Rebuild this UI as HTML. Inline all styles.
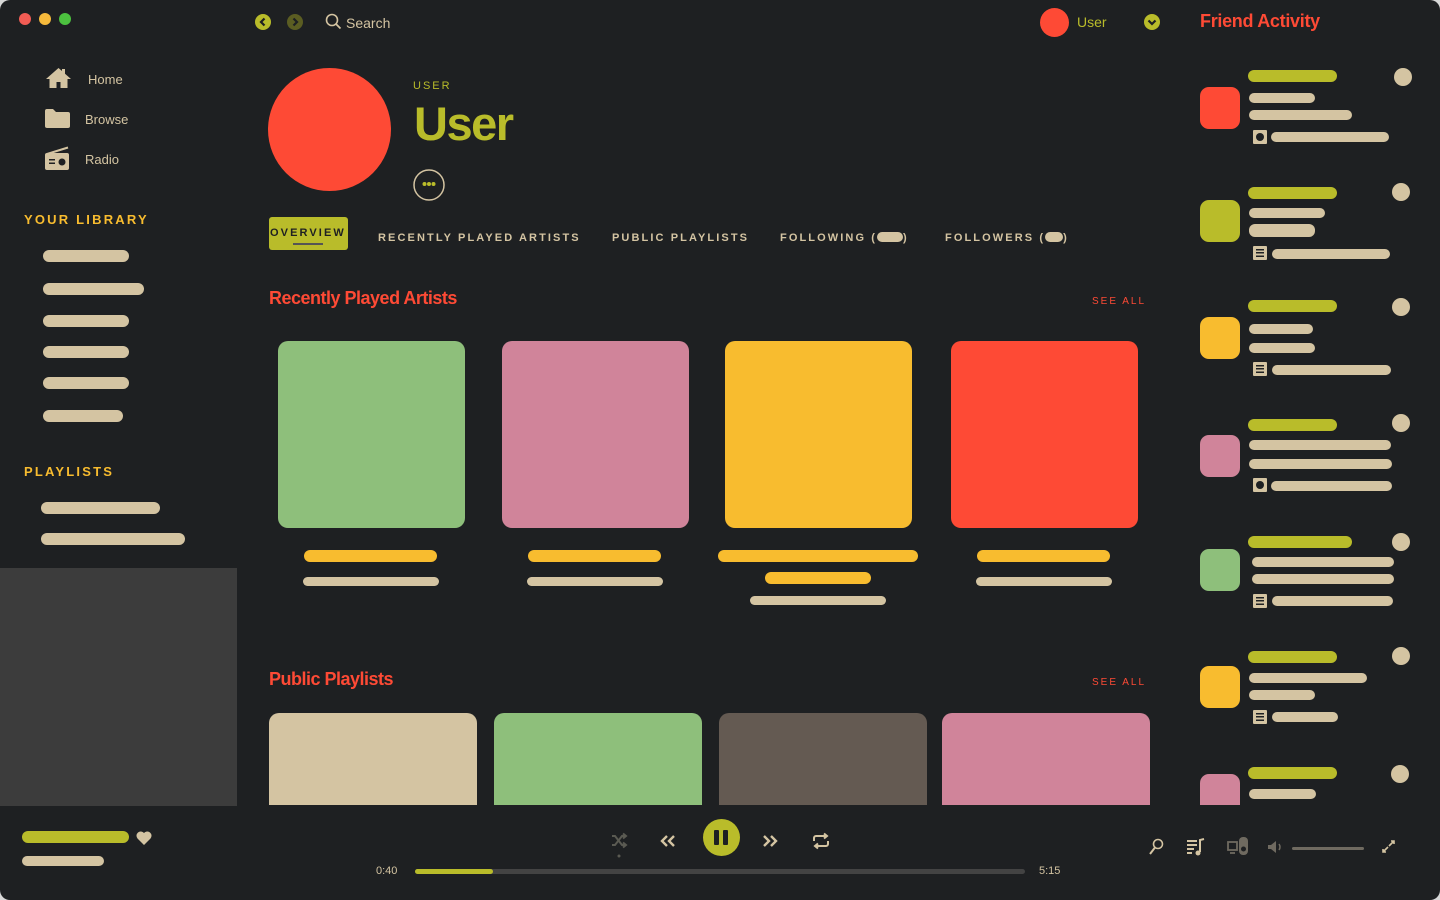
<!DOCTYPE html>
<html><head><meta charset="utf-8"><style>
*{margin:0;padding:0;box-sizing:border-box}
body{width:1440px;height:900px;background:#d8d8d8;overflow:hidden;font-family:"Liberation Sans",sans-serif}
#w{position:absolute;left:0;top:0;width:1440px;height:900px;background:#1e2022;border-radius:10px;overflow:hidden}
.a{position:absolute}
.b{position:absolute;border-radius:6px}
.be{background:#d4c4a2}.li{background:#b9bc2a}.ye{background:#f8bc2f}
.t{position:absolute;color:#d4c4a2;font-size:13px;white-space:nowrap}
.tab{position:absolute;top:232px;color:#d4c4a2;font-size:11px;font-weight:bold;letter-spacing:2.1px;white-space:nowrap}
.pill{display:inline-block;width:26px;height:10px;background:#d4c4a2;border-radius:5px;vertical-align:-1px}
.h{position:absolute;color:#fe4a35;font-size:18px;font-weight:bold;letter-spacing:-0.5px}
.sa{position:absolute;color:#fe4a35;font-size:10px;letter-spacing:2px}
.sq{position:absolute;top:341px;width:187px;height:187px;border-radius:10px}
.pl{position:absolute;top:713px;width:208px;height:92px;border-radius:10px 10px 0 0}
.av{position:absolute;left:1200px;width:40px;height:42px;border-radius:9px}
.c{position:absolute;width:18px;height:18px;border-radius:50%;background:#d4c4a2}
.ic{position:absolute;left:1253px;width:14px;height:14px;background:#d4c4a2;border-radius:1px}
.ic.d::after{content:"";position:absolute;left:3px;top:3px;width:8px;height:8px;border-radius:50%;background:#1e2022}
.ic.l::after{content:"";position:absolute;left:3px;top:3px;width:8px;height:8px;background:repeating-linear-gradient(#1e2022 0 1.5px,transparent 1.5px 3.2px)}
</style></head><body><div id="w">
<div class="a" style="left:19px;top:13px;width:12px;height:12px;border-radius:50%;background:#f25c54"></div>
<div class="a" style="left:39px;top:13px;width:12px;height:12px;border-radius:50%;background:#f6b93b"></div>
<div class="a" style="left:59px;top:13px;width:12px;height:12px;border-radius:50%;background:#4cc13f"></div>
<svg class="a" style="left:255px;top:14px" width="16" height="16"><circle cx="8" cy="8" r="8" fill="#b9bc2a"/><path d="M9.5 4.5L6 8l3.5 3.5" stroke="#1e2022" stroke-width="2.2" fill="none"/></svg>
<svg class="a" style="left:287px;top:14px" width="16" height="16"><circle cx="8" cy="8" r="8" fill="#5b5d22"/><path d="M6.5 4.5L10 8l-3.5 3.5" stroke="#1e2022" stroke-width="2.2" fill="none"/></svg>
<svg class="a" style="left:325px;top:13px" width="17" height="17"><circle cx="7" cy="7" r="5.5" stroke="#d4c4a2" stroke-width="1.6" fill="none"/><path d="M11 11l4.5 4.5" stroke="#d4c4a2" stroke-width="1.8"/></svg>
<div class="t" style="left:346px;top:15px;font-size:14px">Search</div>
<div class="a" style="left:1040px;top:8px;width:29px;height:29px;border-radius:50%;background:#fe4a35"></div>
<div class="t" style="left:1077px;top:14px;color:#b9bc2a;font-size:14px">User</div>
<svg class="a" style="left:1144px;top:14px" width="16" height="16"><circle cx="8" cy="8" r="8" fill="#b9bc2a"/><path d="M4.5 6.5L8 10l3.5-3.5" stroke="#1e2022" stroke-width="2.2" fill="none"/></svg>
<div class="a" style="left:1200px;top:11px;color:#fe4a35;font-size:18px;font-weight:bold;letter-spacing:-0.3px">Friend Activity</div>
<svg class="a" style="left:45px;top:67px" width="27" height="22"><path d="M13.5 1L1 12h3.5v9h7v-6h4v6h7v-9H26L20 6.7V2h-3v2L13.5 1z" fill="#d4c4a2"/></svg>
<div class="t" style="left:88px;top:72px">Home</div>
<svg class="a" style="left:45px;top:109px" width="25" height="19"><path d="M0 2a2 2 0 0 1 2-2h6l3 3h12a2 2 0 0 1 2 2v12a2 2 0 0 1-2 2H2a2 2 0 0 1-2-2z" fill="#d4c4a2"/></svg>
<div class="t" style="left:85px;top:112px">Browse</div>
<svg class="a" style="left:45px;top:146px" width="25" height="24"><path d="M2 8L23 1.5" stroke="#d4c4a2" stroke-width="2"/><rect x="0" y="7" width="24" height="17" rx="2" fill="#d4c4a2"/><rect x="4" y="13" width="6" height="1.5" fill="#1e2022"/><rect x="4" y="16.5" width="6" height="1.5" fill="#1e2022"/><circle cx="17" cy="16" r="3.5" fill="#1e2022"/></svg>
<div class="t" style="left:85px;top:152px">Radio</div>
<div class="a" style="left:24px;top:212px;color:#f8bc2f;font-size:13px;font-weight:bold;letter-spacing:2.2px">YOUR LIBRARY</div>
<div class="b be" style="left:43px;top:250px;width:86px;height:12px"></div>
<div class="b be" style="left:43px;top:283px;width:101px;height:12px"></div>
<div class="b be" style="left:43px;top:315px;width:86px;height:12px"></div>
<div class="b be" style="left:43px;top:346px;width:86px;height:12px"></div>
<div class="b be" style="left:43px;top:377px;width:86px;height:12px"></div>
<div class="b be" style="left:43px;top:410px;width:80px;height:12px"></div>
<div class="a" style="left:24px;top:464px;color:#f8bc2f;font-size:13px;font-weight:bold;letter-spacing:2.2px">PLAYLISTS</div>
<div class="b be" style="left:41px;top:502px;width:119px;height:12px"></div>
<div class="b be" style="left:41px;top:533px;width:144px;height:12px"></div>
<div class="a" style="left:0;top:568px;width:237px;height:238px;background:#3c3c3c"></div>
<div class="a" style="left:268px;top:68px;width:123px;height:123px;border-radius:50%;background:#fe4a35"></div>
<div class="a" style="left:413px;top:80px;color:#b9bc2a;font-size:11px;letter-spacing:2px">USER</div>
<div class="a" style="left:414px;top:96px;color:#b9bc2a;font-size:47px;font-weight:bold;letter-spacing:-1.5px">User</div>
<svg class="a" style="left:413px;top:169px" width="32" height="32"><circle cx="16" cy="16" r="15" stroke="#d4c4a2" stroke-width="1.5" fill="none"/><circle cx="11.5" cy="15" r="2" fill="#b9bc2a"/><circle cx="16" cy="15" r="2" fill="#b9bc2a"/><circle cx="20.5" cy="15" r="2" fill="#b9bc2a"/></svg>
<div class="a" style="left:269px;top:217px;width:79px;height:33px;border-radius:3px;background:#b9bc2a"></div>
<div class="a" style="left:270px;top:227px;color:#1e2022;font-size:11px;font-weight:bold;letter-spacing:2.1px">OVERVIEW</div>
<div class="a" style="left:293px;top:243px;width:30px;height:2px;background:#555"></div>
<div class="tab" style="left:378px">RECENTLY PLAYED ARTISTS</div>
<div class="tab" style="left:612px">PUBLIC PLAYLISTS</div>
<div class="tab" style="left:780px">FOLLOWING (<span class="pill"></span>)</div>
<div class="tab" style="left:945px">FOLLOWERS (<span class="pill" style="width:18px"></span>)</div>
<div class="h" style="left:269px;top:288px">Recently Played Artists</div>
<div class="sa" style="left:1092px;top:296px">SEE ALL</div>
<div class="sq" style="left:278px;background:#8ebf7b"></div>
<div class="sq" style="left:502px;background:#d0849a"></div>
<div class="sq" style="left:725px;background:#f8bc2f"></div>
<div class="sq" style="left:951px;background:#fe4a35"></div>
<div class="b ye" style="left:304px;top:550px;width:133px;height:12px"></div>
<div class="b be" style="left:303px;top:577px;width:136px;height:9px"></div>
<div class="b ye" style="left:528px;top:550px;width:133px;height:12px"></div>
<div class="b be" style="left:527px;top:577px;width:136px;height:9px"></div>
<div class="b ye" style="left:718px;top:550px;width:200px;height:12px"></div>
<div class="b ye" style="left:765px;top:572px;width:106px;height:12px"></div>
<div class="b be" style="left:750px;top:596px;width:136px;height:9px"></div>
<div class="b ye" style="left:977px;top:550px;width:133px;height:12px"></div>
<div class="b be" style="left:976px;top:577px;width:136px;height:9px"></div>
<div class="h" style="left:269px;top:669px">Public Playlists</div>
<div class="sa" style="left:1092px;top:677px">SEE ALL</div>
<div class="pl" style="left:269px;background:#d4c4a2"></div>
<div class="pl" style="left:494px;background:#8ebf7b"></div>
<div class="pl" style="left:719px;background:#645a52"></div>
<div class="pl" style="left:942px;background:#d0849a"></div>
<div class="av" style="top:87px;background:#fe4a35"></div>
<div class="b li" style="left:1248px;top:70px;width:89px;height:12px"></div><div class="c" style="left:1394px;top:68px"></div>
<div class="b be" style="left:1249px;top:93px;width:66px;height:10px"></div><div class="b be" style="left:1249px;top:110px;width:103px;height:10px"></div>
<div class="ic d" style="top:130px"></div><div class="b be" style="left:1271px;top:132px;width:118px;height:10px"></div>
<div class="av" style="top:200px;background:#b9bc2a"></div>
<div class="b li" style="left:1248px;top:187px;width:89px;height:12px"></div><div class="c" style="left:1392px;top:183px"></div>
<div class="b be" style="left:1249px;top:208px;width:76px;height:10px"></div><div class="b be" style="left:1249px;top:224px;width:66px;height:13px"></div>
<div class="ic l" style="top:246px"></div><div class="b be" style="left:1272px;top:249px;width:118px;height:10px"></div>
<div class="av" style="top:317px;background:#f8bc2f"></div>
<div class="b li" style="left:1248px;top:300px;width:89px;height:12px"></div><div class="c" style="left:1392px;top:298px"></div>
<div class="b be" style="left:1249px;top:324px;width:64px;height:10px"></div><div class="b be" style="left:1249px;top:343px;width:66px;height:10px"></div>
<div class="ic l" style="top:362px"></div><div class="b be" style="left:1272px;top:365px;width:119px;height:10px"></div>
<div class="av" style="top:435px;background:#d0849a"></div>
<div class="b li" style="left:1248px;top:419px;width:89px;height:12px"></div><div class="c" style="left:1392px;top:414px"></div>
<div class="b be" style="left:1249px;top:440px;width:142px;height:10px"></div><div class="b be" style="left:1249px;top:459px;width:143px;height:10px"></div>
<div class="ic d" style="top:478px"></div><div class="b be" style="left:1271px;top:481px;width:121px;height:10px"></div>
<div class="av" style="top:549px;background:#8ebf7b"></div>
<div class="b li" style="left:1248px;top:536px;width:104px;height:12px"></div><div class="c" style="left:1392px;top:533px"></div>
<div class="b be" style="left:1252px;top:557px;width:142px;height:10px"></div><div class="b be" style="left:1252px;top:574px;width:142px;height:10px"></div>
<div class="ic l" style="top:594px"></div><div class="b be" style="left:1272px;top:596px;width:121px;height:10px"></div>
<div class="av" style="top:666px;background:#f8bc2f"></div>
<div class="b li" style="left:1248px;top:651px;width:89px;height:12px"></div><div class="c" style="left:1392px;top:647px"></div>
<div class="b be" style="left:1249px;top:673px;width:118px;height:10px"></div><div class="b be" style="left:1249px;top:690px;width:66px;height:10px"></div>
<div class="ic l" style="top:710px"></div><div class="b be" style="left:1272px;top:712px;width:66px;height:10px"></div>
<div class="a" style="left:1200px;top:774px;width:40px;height:31px;border-radius:9px 9px 0 0;background:#d0849a"></div>
<div class="b li" style="left:1248px;top:767px;width:89px;height:12px"></div><div class="c" style="left:1391px;top:765px"></div>
<div class="b be" style="left:1249px;top:789px;width:67px;height:10px"></div>
<div class="b li" style="left:22px;top:831px;width:107px;height:12px"></div>
<svg class="a" style="left:136px;top:830px" width="16" height="15"><path d="M8 15L1.5 8.5A4 4 0 0 1 8 3a4 4 0 0 1 6.5 5.5z" fill="#d4c4a2"/></svg>
<div class="b be" style="left:22px;top:856px;width:82px;height:10px"></div>
<svg class="a" style="left:610px;top:832px" width="18" height="26"><path d="M2 4h3l7 9h4M2 13h3l7-9h4M13 1.5l3 2.5-3 2.5M13 10.5l3 2.5-3 2.5" stroke="#5a5a52" stroke-width="2" fill="none"/><circle cx="9" cy="24" r="1.5" fill="#5a5a52"/></svg>
<svg class="a" style="left:660px;top:834px" width="16" height="14"><path d="M7 2L2 7l5 5M14 2L9 7l5 5" stroke="#d4c4a2" stroke-width="2.4" fill="none"/></svg>
<div class="a" style="left:703px;top:819px;width:37px;height:37px;border-radius:50%;background:#b9bc2a"></div>
<div class="a" style="left:714px;top:830px;width:5px;height:15px;background:#1e2022;border-radius:1px"></div>
<div class="a" style="left:723px;top:830px;width:5px;height:15px;background:#1e2022;border-radius:1px"></div>
<svg class="a" style="left:762px;top:834px" width="16" height="14"><path d="M2 2l5 5-5 5M9 2l5 5-5 5" stroke="#d4c4a2" stroke-width="2.4" fill="none"/></svg>
<svg class="a" style="left:811px;top:832px" width="20" height="18"><path d="M3 9V6a2 2 0 0 1 2-2h10M13 1.5l3 2.5-3 2.5M17 9v3a2 2 0 0 1-2 2H5M7 11.5l-3 2.5 3 2.5" stroke="#d4c4a2" stroke-width="2" fill="none"/></svg>
<div class="t" style="left:376px;top:865px;font-size:11px">0:40</div>
<div class="a" style="left:415px;top:869px;width:610px;height:5px;border-radius:3px;background:#434343"></div>
<div class="a" style="left:415px;top:869px;width:78px;height:5px;border-radius:3px;background:#b9bc2a"></div>
<div class="t" style="left:1039px;top:865px;font-size:11px">5:15</div>
<svg class="a" style="left:1148px;top:838px" width="16" height="18"><circle cx="10" cy="6" r="4.5" stroke="#d4c4a2" stroke-width="1.6" fill="none"/><path d="M7 9.5L2 16" stroke="#d4c4a2" stroke-width="2"/></svg>
<svg class="a" style="left:1186px;top:838px" width="20" height="18"><path d="M1 3h10M1 7h10M1 11h7M1 15h5" stroke="#d4c4a2" stroke-width="2"/><path d="M14 14V2l4-1" stroke="#d4c4a2" stroke-width="2" fill="none"/><circle cx="12" cy="15" r="2.5" fill="#d4c4a2"/></svg>
<svg class="a" style="left:1227px;top:836px" width="22" height="20"><rect x="1" y="6" width="9" height="8" stroke="#6f6a60" stroke-width="1.8" fill="none"/><path d="M3 17h5" stroke="#6f6a60" stroke-width="1.8"/><rect x="12" y="1" width="9" height="18" rx="4" fill="#6f6a60"/><circle cx="16.5" cy="13" r="2.5" fill="#1e2022"/></svg>
<svg class="a" style="left:1267px;top:840px" width="18" height="14"><path d="M1 5h3l5-4v12l-5-4H1z" fill="#6f6a60"/><path d="M12 4q2 3 0 6" stroke="#6f6a60" stroke-width="1.5" fill="none"/></svg>
<div class="a" style="left:1292px;top:847px;width:72px;height:3px;border-radius:2px;background:#6f6a60"></div>
<svg class="a" style="left:1381px;top:839px" width="15" height="15"><path d="M8 7l5-5M10 2h3v3M7 8l-5 5M2 10v3h3" stroke="#d4c4a2" stroke-width="1.6" fill="none"/></svg>
</div></body></html>
